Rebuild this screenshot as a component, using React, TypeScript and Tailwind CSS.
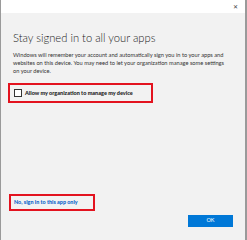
export default function App() {
  return (
    <div
      className="w-[247px] h-[240px] flex flex-col border-l border-r-2 border-[#9a9a9a] bg-[#f2f2f2]"
      style={{ fontFamily: 'Lato, "Open Sans", sans-serif' }}
    >
      <div className="h-[13px] bg-white flex justify-end items-center pr-[7px]">
        <span className="text-[6px] leading-none text-[#444]">✕</span>
      </div>
      <div className="flex-1 flex flex-col px-[12px] pb-[13px]">
        <h1 className="mt-[18px] text-[11.2px] leading-[14px] font-light text-[#222]">
          Stay signed in to all your apps
        </h1>
        <p className="mt-[6px] text-[5.7px] leading-[7.8px] text-[#333] pr-[8px]">
          Windows will remember your account and automatically sign you in to your apps and
          websites on this device. You may need to let your organization manage some settings
          on your device.
        </p>
        <div className="mt-[9px] ml-[-5px] w-[145px] h-[20px] border-2 border-[#e3131f] flex items-center pl-[4px] gap-[3px]">
          <span className="w-[8px] h-[8px] border border-[#333] bg-white" />
          <span className="text-[5.5px] font-black text-[#222] whitespace-nowrap">
            Allow my organization to manage my device
          </span>
        </div>
        <div className="mt-auto ml-[-4px] w-[86px] h-[17px] border-2 border-[#e3131f] flex items-center pl-[3px]">
          <span className="text-[5.4px] font-black text-[#0a63c9] whitespace-nowrap">
            No, sign in to this app only
          </span>
        </div>
        <div className="mt-[4px] flex justify-end">
          <button className="w-[45px] h-[12px] bg-[#0078d7] text-white text-[5.5px] leading-none flex items-center justify-center">
            OK
          </button>
        </div>
      </div>
    </div>
  );
}
